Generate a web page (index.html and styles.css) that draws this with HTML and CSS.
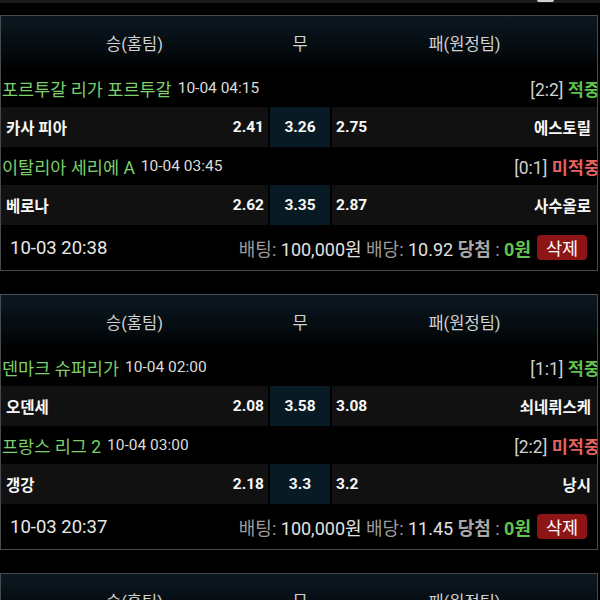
FILE: index.html
```html
<!DOCTYPE html>
<html lang="ko">
<head>
<meta charset="utf-8">
<title>배팅 내역</title>
<link rel="stylesheet" href="styles.css">
</head>
<body>
<div class="edge"><span class="edge-pill"></span></div>
<main class="list">
  <section class="slip">
    <div class="cols head">
      <div>승(홈팀)</div><div>무</div><div>패(원정팀)</div>
    </div>
    <div class="league">
      <span class="lname">포르투갈 리가 포르투갈</span><span class="ltime">10-04 04:15</span>
      <span class="result"><span class="score">[2:2]</span> <b class="hit">적중</b></span>
    </div>
    <div class="cols match">
      <div class="cell home"><b>카사 피아</b><b>2.41</b></div>
      <div class="cell draw"><b>3.26</b></div>
      <div class="cell away"><b>2.75</b><b>에스토릴</b></div>
    </div>
    <div class="league">
      <span class="lname">이탈리아 세리에 A</span><span class="ltime">10-04 03:45</span>
      <span class="result"><span class="score">[0:1]</span> <b class="miss">미적중</b></span>
    </div>
    <div class="cols match">
      <div class="cell home"><b>베로나</b><b>2.62</b></div>
      <div class="cell draw"><b>3.35</b></div>
      <div class="cell away"><b>2.87</b><b>사수올로</b></div>
    </div>
    <div class="foot">
      <span class="when">10-03 20:38</span>
      <span class="sum"><span class="lbl">배팅:</span> <span class="val">100,000원</span> <span class="lbl">배당:</span> <span class="val">10.92</span> <b class="lbl">당첨</b> <span class="lbl">:</span> <b class="win">0원</b></span>
      <button class="del">삭제</button>
    </div>
  </section>

  <section class="slip">
    <div class="cols head">
      <div>승(홈팀)</div><div>무</div><div>패(원정팀)</div>
    </div>
    <div class="league">
      <span class="lname">덴마크 슈퍼리가</span><span class="ltime">10-04 02:00</span>
      <span class="result"><span class="score">[1:1]</span> <b class="hit">적중</b></span>
    </div>
    <div class="cols match">
      <div class="cell home"><b>오덴세</b><b>2.08</b></div>
      <div class="cell draw"><b>3.58</b></div>
      <div class="cell away"><b>3.08</b><b>쇠네뤼스케</b></div>
    </div>
    <div class="league">
      <span class="lname">프랑스 리그 2</span><span class="ltime">10-04 03:00</span>
      <span class="result"><span class="score">[2:2]</span> <b class="miss">미적중</b></span>
    </div>
    <div class="cols match">
      <div class="cell home"><b>갱강</b><b>2.18</b></div>
      <div class="cell draw"><b>3.3</b></div>
      <div class="cell away"><b>3.2</b><b>낭시</b></div>
    </div>
    <div class="foot">
      <span class="when">10-03 20:37</span>
      <span class="sum"><span class="lbl">배팅:</span> <span class="val">100,000원</span> <span class="lbl">배당:</span> <span class="val">11.45</span> <b class="lbl">당첨</b> <span class="lbl">:</span> <b class="win">0원</b></span>
      <button class="del">삭제</button>
    </div>
  </section>

  <section class="slip">
    <div class="cols head">
      <div>승(홈팀)</div><div>무</div><div>패(원정팀)</div>
    </div>
  </section>
</main>
</body>
</html>
```
FILE: styles.css
```css
html, body {
  margin: 0;
  padding: 0;
  background: #000;
  height: 600px;
  overflow: hidden;
}

body {
  font-family: Roboto, "Noto Sans CJK KR", sans-serif;
  color: #e6e6e6;
}

/* bottom edge of the slip scrolled above */
.edge {
  height: 3px;
  background: #1a1a1a;
  display: flex;
  justify-content: flex-end;
  padding-right: 46px;
}
.edge-pill {
  width: 17px;
  height: 2px;
  background: #cfcfcf;
  border-radius: 0 0 3px 3px;
}

.list {
  display: flex;
  flex-direction: column;
  gap: 23px;
  margin-top: 12px;
}

.slip {
  width: 598px;
  box-sizing: border-box;
  border: 1px solid #474b4e;
  overflow: hidden;
  flex: none;
}

.cols {
  display: grid;
  grid-template-columns: 267px 60px 1fr;
  column-gap: 2px;
}

.head {
  height: 53px;
  align-items: center;
  text-align: center;
  font-size: 16.5px;
  color: #d2d2d2;
  background: linear-gradient(to bottom, #0b1821 0%, #050b0f 65%, #000 100%);
}

.league {
  height: 38px;
  display: flex;
  align-items: center;
  padding-left: 1px;
  white-space: nowrap;
}
.lname {
  color: #7bd06b;
  font-size: 17.5px;
}
.ltime {
  color: #dcdcdc;
  font-size: 15.5px;
  margin-left: 6px;
}
.result {
  margin-left: auto;
  margin-right: -3px;
  font-size: 17.5px;
}
.score {
  color: #d0d0d0;
}
.hit {
  color: #5fc24c;
  font-weight: 700;
}
.miss {
  color: #e5625f;
  font-weight: 700;
}

.match {
  height: 40px;
}
.cell {
  display: flex;
  align-items: center;
  justify-content: space-between;
  background: #111111;
  color: #f7f7f7;
  font-size: 15.5px;
}
.cell b {
  font-weight: 700;
}
.home {
  padding: 0 4px 0 5px;
}
.draw {
  justify-content: center;
  background: #081a24;
}
.away {
  padding: 0 6px 0 4px;
}

.foot {
  height: 45px;
  display: flex;
  align-items: center;
  padding: 0 10px 0 9px;
  white-space: nowrap;
}
.when {
  font-size: 18.5px;
  color: #e8e8e8;
}
.sum {
  margin-left: auto;
  font-size: 18px;
}
.lbl {
  color: #9c9c9c;
}
b.lbl {
  font-weight: 700;
  color: #a8a8a8;
}
.val {
  color: #e2e2e2;
}
.win {
  color: #62c54c;
  font-weight: 700;
}
.del {
  margin-left: 6px;
  width: 50px;
  height: 25px;
  border: 0;
  border-radius: 4px;
  background: #8d1515;
  color: #fff;
  font: 17.5px Roboto, "Noto Sans CJK KR", sans-serif;
  padding: 0;
}
```
